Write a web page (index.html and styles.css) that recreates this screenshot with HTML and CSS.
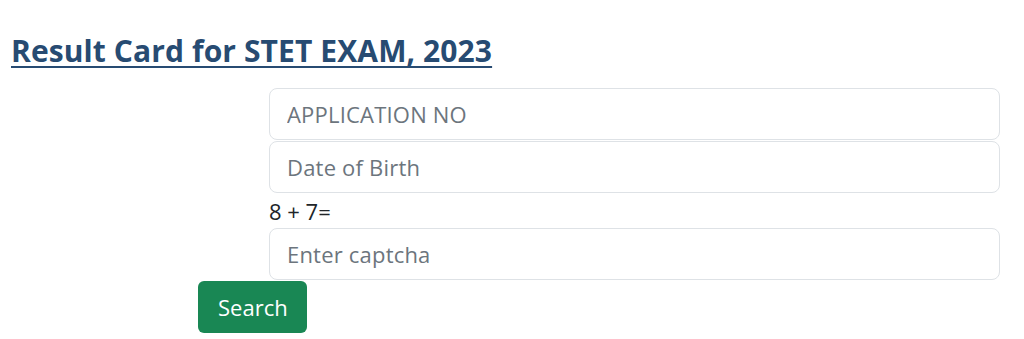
FILE: index.html
```html
<!DOCTYPE html>
<html lang="en">
<head>
  <meta charset="UTF-8" />
  <title>Result Card for STET EXAM, 2023</title>
  <link rel="stylesheet" href="styles.css">
</head>
<body>

  <h2 class="page-title">Result Card for STET EXAM, 2023</h2>

  <form class="result-form">
    <div class="fields">
      <input class="form-control" type="text" placeholder="APPLICATION NO">
      <input class="form-control" type="text" placeholder="Date of Birth">
      <label class="captcha-label">8 + 7=</label>
      <input class="form-control" type="text" placeholder="Enter captcha">
    </div>
    <button class="btn-search" type="button">Search</button>
  </form>

</body>
</html>
```

FILE: styles.css
```css
/* page */
body {
  margin: 0;
  padding: 0 11px;
  font-family: "Open Sans", "Noto Sans", sans-serif;
  background: #fff;
  color: #212529;
}

/* heading */
.page-title {
  margin: 0;
  padding-top: 33px;
  font-size: 30px;
  font-weight: 700;
  line-height: 36px;
  letter-spacing: 0.1px;
  color: #274b72;
  text-decoration: underline;
  text-underline-offset: 4px;
  text-decoration-thickness: 2px;
}

/* form */
.result-form {
  display: flex;
  flex-direction: column;
  margin-top: 19px;
}
.fields {
  display: flex;
  flex-direction: column;
  width: 731px;
  margin-left: 258px;
}
.form-control {
  box-sizing: border-box;
  height: 52px;
  padding: 0 17px;
  margin-bottom: 1px;
  border: 1px solid #dee2e6;
  border-radius: 8px;
  font-family: inherit;
  font-size: 22px;
  letter-spacing: 0.2px;
  color: #212529;
  background: #fff;
}
.form-control::placeholder {
  color: #6c757d;
}
.captcha-label {
  font-size: 22px;
  line-height: 30px;
  margin: 2px 0 2px;
}
.btn-search {
  align-self: flex-start;
  margin-left: 187px;
  height: 52px;
  padding: 0 19px 0 20px;
  border: none;
  border-radius: 6px;
  background: #198754;
  color: #fff;
  font-family: inherit;
  font-size: 22px;
  cursor: pointer;
}
```
